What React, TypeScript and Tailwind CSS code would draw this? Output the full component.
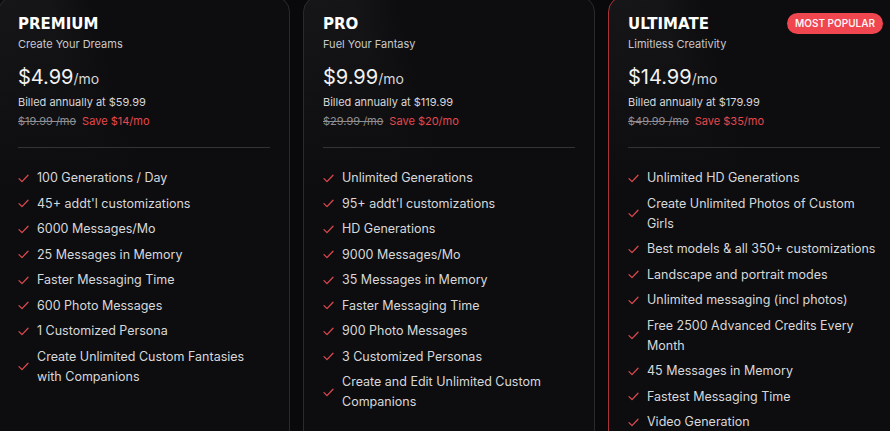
import React from "react";

type Plan = {
  name: string;
  tagline: string;
  price: string;
  billed: string;
  was: string;
  save: string;
  features: string[];
  popular?: boolean;
};

const plans: Plan[] = [
  {
    name: "PREMIUM",
    tagline: "Create Your Dreams",
    price: "$4.99",
    billed: "Billed annually at $59.99",
    was: "$19.99 /mo",
    save: "Save $14/mo",
    features: [
      "100 Generations / Day",
      "45+ addt'l customizations",
      "6000 Messages/Mo",
      "25 Messages in Memory",
      "Faster Messaging Time",
      "600 Photo Messages",
      "1 Customized Persona",
      "Create Unlimited Custom Fantasies with Companions",
    ],
  },
  {
    name: "PRO",
    tagline: "Fuel Your Fantasy",
    price: "$9.99",
    billed: "Billed annually at $119.99",
    was: "$29.99 /mo",
    save: "Save $20/mo",
    features: [
      "Unlimited Generations",
      "95+ addt'l customizations",
      "HD Generations",
      "9000 Messages/Mo",
      "35 Messages in Memory",
      "Faster Messaging Time",
      "900 Photo Messages",
      "3 Customized Personas",
      "Create and Edit Unlimited Custom Companions",
    ],
  },
  {
    name: "ULTIMATE",
    tagline: "Limitless Creativity",
    price: "$14.99",
    billed: "Billed annually at $179.99",
    was: "$49.99 /mo",
    save: "Save $35/mo",
    popular: true,
    features: [
      "Unlimited HD Generations",
      "Create Unlimited Photos of Custom Girls",
      "Best models & all 350+ customizations",
      "Landscape and portrait modes",
      "Unlimited messaging (incl photos)",
      "Free 2500 Advanced Credits Every Month",
      "45 Messages in Memory",
      "Fastest Messaging Time",
      "Video Generation",
    ],
  },
];

const Check = () => (
  <svg width="11" height="9" viewBox="0 0 11 9" fill="none" className="shrink-0">
    <path d="M1 4.6 L4 7.6 L10 1.2" stroke="#d9474d" strokeWidth="1.3" strokeLinecap="round" strokeLinejoin="round" />
  </svg>
);

const PlanCard = ({ plan }: { plan: Plan }) => {
  return (
    <div
      className={`relative w-[292px] shrink-0 rounded-[16px] border px-[19px] pt-[17px] bg-[linear-gradient(180deg,rgba(13,13,15,0)_0px,#0d0d0f_190px),linear-gradient(75deg,#18181a_0%,#151517_42%,#0d0d0f_52%)] ${
        plan.popular ? "border-[#a8343a]" : "border-[#2a2a2e]"
      }`}
    >
      {plan.popular && (
        <span className="absolute top-[16px] right-[16px] rounded-full bg-[#ef4650] px-[8px] py-[4px] text-[10px] leading-[13px] font-semibold text-white/95">
          MOST POPULAR
        </span>
      )}

      {/* header */}
      <h2 className="font-['DejaVu_Sans',sans-serif] text-[15px] leading-[20px] font-bold text-white">{plan.name}</h2>
      <p className="mt-[2px] text-[11px] leading-[16px] text-[#c9c9cc]">{plan.tagline}</p>

      <div className="mt-[14px] flex items-baseline leading-[23px]">
        <span className="text-[20px] text-[#f2f2f2]">{plan.price}</span>
        <span className="text-[14px] text-[#d6d6d8]">/mo</span>
      </div>
      <p className="mt-[4px] text-[11px] leading-[16px] text-[#d6d6d8]">{plan.billed}</p>
      <div className="mt-[3px] flex items-baseline gap-[6px] text-[11px] leading-[16px]">
        <span className="text-[#8e8e92] line-through">{plan.was}</span>
        <span className="text-[#e5484d]">{plan.save}</span>
      </div>

      <div className="mt-[18px] h-px bg-[#333336]" />

      {/* features */}
      <ul className="mt-[20px] flex flex-col gap-[5.5px] pb-6">
        {plan.features.map((f) => (
          <li key={f} className="flex items-center gap-[8px]">
            <Check />
            <span className="text-[12.5px] leading-[20px] text-[#d8d8da]">{f}</span>
          </li>
        ))}
      </ul>
    </div>
  );
};

export default function App() {
  return (
    <div className="h-[431px] w-[890px] overflow-hidden bg-[#09090b] font-['Inter',sans-serif]">
      <div className="ml-[-2px] mt-[-4px] flex gap-[13px]">
        {plans.map((p) => (
          <PlanCard key={p.name} plan={p} />
        ))}
      </div>
    </div>
  );
}
